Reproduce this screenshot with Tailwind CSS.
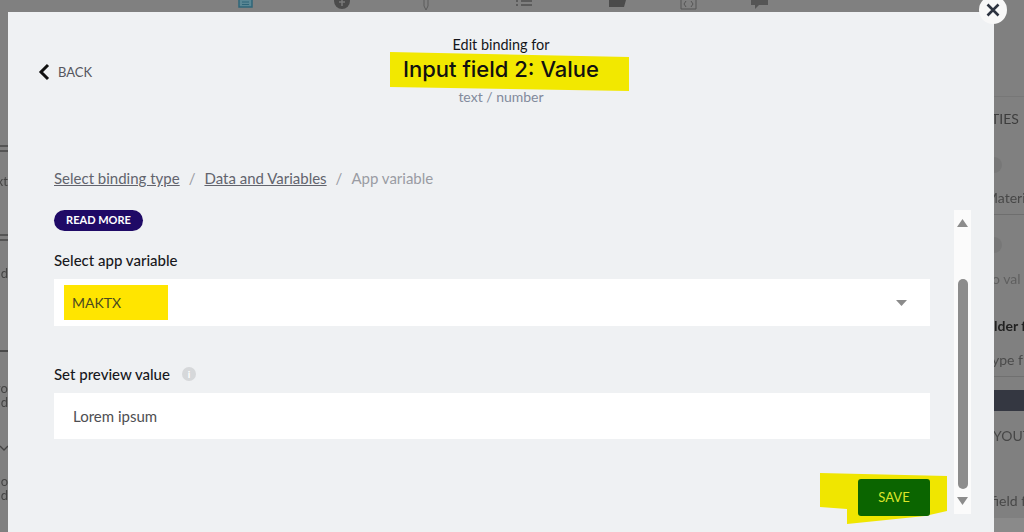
<!DOCTYPE html>
<html lang="en">
<head>
  <meta charset="UTF-8" />
  <title>Edit binding</title>
  <script src="https://cdn.jsdelivr.net/npm/@tailwindcss/browser@4"></script>
</head>
<body class="bg-[#808080] font-['Lato','Liberation_Sans',sans-serif]">
  <div class="relative w-[1024px] h-[532px] overflow-hidden flex flex-col">

    <!-- toolbar behind the overlay, only the bottom of the icons shows -->
    <div class="h-3 shrink-0 flex items-end relative">
      <svg class="absolute left-0 top-0" width="1024" height="12" viewBox="0 0 1024 12" fill="none">
        <rect x="239" y="-4" width="13" height="11" fill="#5a8794" stroke="#2f6578" stroke-width="1.5"/>
        <path d="M242 2h7M242 4.5h7" stroke="#2f6578"/>
        <circle cx="342" cy="1" r="8" fill="#4b4b4b"/>
        <path d="M342 0v6M339 2h6" stroke="#7a7a7a" stroke-width="1.5"/>
        <path d="M424 0v6l2 4 2-4V0" stroke="#5c5c5c"/>
        <path d="M516 1h2M521 1h11M516 5h2M521 5h11" stroke="#4f4f4f" stroke-width="1.5"/>
        <path d="M609 0h17l-2 7h-15z" fill="#4b4b4b"/>
        <path d="M681 0v9h15V0" stroke="#555"/>
        <path d="M686 1l-2 3 2 3M691 1l2 3-2 3" stroke="#555"/>
        <path d="M751 0v5h4v4l4-4h9V0z" fill="#555"/>
      </svg>
    </div>

    <div class="flex-1 flex min-h-0">
      <!-- left sliver of the page behind -->
      <div class="w-2 shrink-0 overflow-hidden text-[13px] leading-[14px] text-[#444] flex flex-col items-end blur-[0.4px]">
        <div class="w-2 h-[2px] mt-[133px] bg-[#555]"></div>
        <div class="w-2 h-[2px] mt-[3px] bg-[#555]"></div>
        <div class="mt-[22px] whitespace-nowrap">xt</div>
        <div class="w-2 h-[2px] mt-[46px] bg-[#555]"></div>
        <div class="w-2 h-[2px] mt-[3px] bg-[#555]"></div>
        <div class="mt-[25px]">d</div>
        <div class="w-2 h-[2px] mt-[70px] bg-[#4a4a4a]"></div>
        <div class="mt-[29px] whitespace-nowrap">vo</div>
        <div>d</div>
        <svg class="mt-[36px] shrink-0" width="8" height="6" viewBox="0 0 8 6" fill="none"><path d="M0 1l4 4 4-4" stroke="#444" stroke-width="1.3"/></svg>
        <div class="mt-[23px]">o</div>
        <div>d</div>
      </div>

      <!-- modal -->
      <div class="relative w-[986px] shrink-0 bg-[#eff1f3] pl-[46px] flex flex-col">
        <!-- marker strokes -->
        <svg class="absolute left-0 top-0" width="986" height="520" viewBox="8 12 986 520">
          <path d="M390 52L629 57V91L390 87Z" fill="#f2e800"/>
          <path d="M820 473L947 476V511L925 516L847 524V509L820 507Z" fill="#f0e600"/>
        </svg>

        <!-- header -->
        <div class="relative h-[156px] shrink-0 flex flex-col items-center pr-[46px] pt-[25px]">
          <div class="absolute left-[-16px] top-[51px] flex items-center gap-[8px]">
            <svg width="12" height="18" viewBox="0 0 12 18" fill="none"><path d="M10 2L3 9l7 7" stroke="#111" stroke-width="3"/></svg>
            <span class="text-[13px] leading-4 text-[#55565e]">BACK</span>
          </div>
          <div class="text-[14.4px] leading-4 text-[#15161a]">Edit binding for</div>
          <div class="relative font-['Inter',sans-serif] text-[22px] leading-[28px] font-medium text-[#111] mt-[2px]">Input field 2: Value</div>
          <div class="text-[14px] leading-4 text-[#828a9c] mt-[6px]">text / number</div>
        </div>

        <!-- breadcrumb -->
        <div class="relative text-[15px] leading-5 flex gap-[9px] text-[#9a9ca3] shrink-0">
          <span class="underline text-[#62646d]">Select binding type</span>
          <span>/</span>
          <span class="underline text-[#62646d]">Data and Variables</span>
          <span>/</span>
          <span>App variable</span>
        </div>

        <!-- form + scrollbar -->
        <div class="relative flex mt-[22px]">
          <div class="w-[876px] shrink-0 flex flex-col items-start">
            <div class="w-[89px] h-[21px] rounded-full bg-[#1f0a66] text-white text-[11px] font-bold flex items-center justify-center">READ MORE</div>
            <div class="text-[15px] leading-5 font-medium text-[#17181c] mt-[19px]">Select app variable</div>
            <div class="relative w-full h-[47px] bg-white mt-[9px] pl-[10px] pr-[23px] flex items-center justify-between">
              <span class="w-[104px] h-[35px] pl-2 bg-[#ffe500] flex items-center text-[14px] text-[#4a4a20]">MAKTX</span>
              <svg width="11" height="6" viewBox="0 0 11 6"><path d="M0 0h11L5.5 6z" fill="#8b8b8b"/></svg>
            </div>
            <div class="flex items-center gap-[12px] mt-[38px]">
              <span class="text-[15px] leading-5 font-medium text-[#17181c]">Set preview value</span>
              <span class="w-[14px] h-[14px] rounded-full bg-[#d6d8da] text-white text-[10px] font-bold flex items-center justify-center">i</span>
            </div>
            <div class="w-full h-[46px] bg-white mt-[9px] pl-[19px] flex items-center text-[15px] text-[#4e4e52]">Lorem ipsum</div>
            <div class="relative self-end w-[72px] h-[37px] rounded-[3px] bg-[#0b6500] text-[#dce62a] text-[13px] mt-[40px] flex items-center justify-center">SAVE</div>
          </div>
          <div class="ml-6 w-[17px] h-[304px] bg-[#fbfbfb] flex flex-col items-center pt-[9px]">
            <svg width="11" height="8" viewBox="0 0 11 8"><path d="M5.5 0L11 8H0z" fill="#8c8c8c"/></svg>
            <div class="w-[10px] h-[210px] rounded-full bg-[#8c8c8c] mt-[52px]"></div>
            <svg class="mt-2" width="11" height="8" viewBox="0 0 11 8"><path d="M0 0h11L5.5 8z" fill="#8c8c8c"/></svg>
          </div>
        </div>
      </div>

      <!-- right sliver of the page behind -->
      <div class="flex-1 overflow-hidden flex flex-col text-[14px] leading-4 text-[#3d3d3d] whitespace-nowrap blur-[0.4px]">
        <div class="h-px bg-[#777] mt-[84px]"></div>
        <div class="mt-[14px] -ml-[3px]">TIES</div>
        <div class="w-2 h-4 mt-[30px] rounded-r-full bg-[#777] shrink-0"></div>
        <div class="mt-[17px] -ml-[9px] text-[#474747]">Materi</div>
        <div class="h-px bg-[#6e6e6e] mt-[8px] shrink-0"></div>
        <div class="w-2 h-4 mt-[22px] rounded-r-full bg-[#777] shrink-0"></div>
        <div class="mt-[18px] -ml-[2px] text-[#5f5f5f]">o val</div>
        <div class="mt-[31px] font-bold text-[#222]">lder f</div>
        <div class="mt-[18px] -ml-[2px] text-[#4a4a4a]">ype f</div>
        <div class="h-px bg-[#707070] mt-[8px] shrink-0"></div>
        <div class="h-[21px] bg-[#343741] mt-[13px] shrink-0"></div>
        <div class="mt-[17px] -ml-[1px] text-[#474747]">YOUT</div>
        <div class="mt-[49px] -ml-[3px] text-[#474747]">field f</div>
        <div class="flex-1 bg-[#8a8a8a] mt-[9px]"></div>
      </div>
    </div>

    <!-- close button -->
    <div class="absolute left-[979px] top-[-4px] w-[28px] h-[28px] rounded-full bg-[#f8f8f8] flex items-center justify-center">
      <svg width="14" height="14" viewBox="0 0 14 14" fill="none"><path d="M1.5 1.5l11 11M12.5 1.5l-11 11" stroke="#2d3340" stroke-width="2.6"/></svg>
    </div>
  </div>
</body>
</html>
